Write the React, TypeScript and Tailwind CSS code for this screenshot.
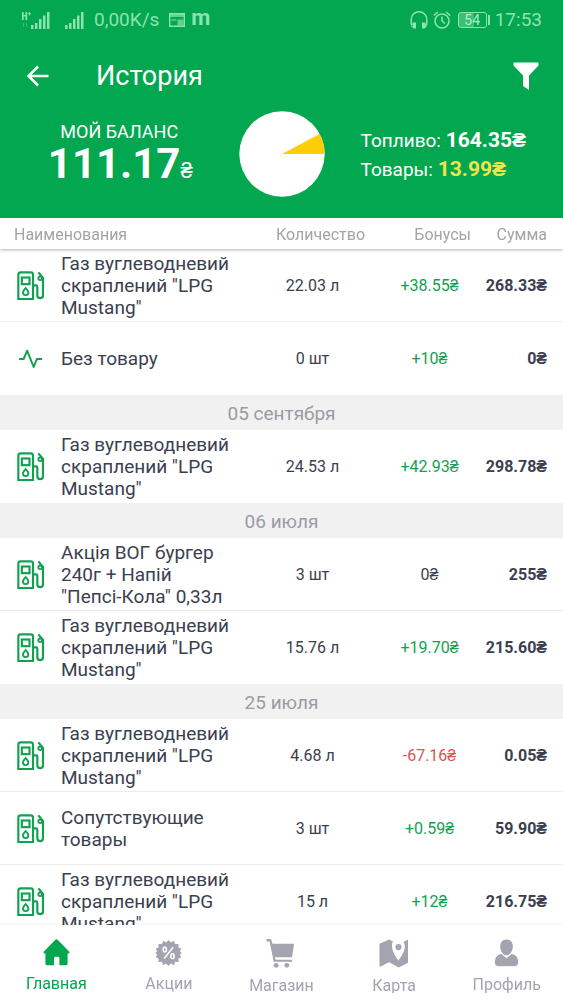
import React from "react";

type Tone = "plus" | "minus" | "none";

interface Entry {
  icon: "fuel" | "pulse";
  name: string;
  amount: string;
  bonus: string;
  tone: Tone;
  sum: string;
}

interface Group {
  date?: string;
  entries: Entry[];
}

const LPG = 'Газ вуглеводневий скраплений "LPG Mustang"';

const groups: Group[] = [
  {
    entries: [
      { icon: "fuel", name: LPG, amount: "22.03 л", bonus: "+38.55₴", tone: "plus", sum: "268.33₴" },
      { icon: "pulse", name: "Без товару", amount: "0 шт", bonus: "+10₴", tone: "plus", sum: "0₴" },
    ],
  },
  {
    date: "05 сентября",
    entries: [{ icon: "fuel", name: LPG, amount: "24.53 л", bonus: "+42.93₴", tone: "plus", sum: "298.78₴" }],
  },
  {
    date: "06 июля",
    entries: [
      { icon: "fuel", name: 'Акція ВОГ бургер 240г + Напій "Пепсі-Кола" 0,33л', amount: "3 шт", bonus: "0₴", tone: "none", sum: "255₴" },
      { icon: "fuel", name: LPG, amount: "15.76 л", bonus: "+19.70₴", tone: "plus", sum: "215.60₴" },
    ],
  },
  {
    date: "25 июля",
    entries: [
      { icon: "fuel", name: LPG, amount: "4.68 л", bonus: "-67.16₴", tone: "minus", sum: "0.05₴" },
      { icon: "fuel", name: "Сопутствующие товары", amount: "3 шт", bonus: "+0.59₴", tone: "plus", sum: "59.90₴" },
      { icon: "fuel", name: LPG, amount: "15 л", bonus: "+12₴", tone: "plus", sum: "216.75₴" },
    ],
  },
];

const toneClass: Record<Tone, string> = {
  plus: "text-[#12a150]",
  minus: "text-[#e0524f]",
  none: "text-[#3b4050]",
};

function FuelIcon() {
  return (
    <svg viewBox="0 0 84 90" className="h-[30px] w-7" fill="none" stroke="#12a150" strokeWidth="6.5" aria-hidden="true">
      <path d="M4 84V11a7 7 0 0 1 7-7h30a7 7 0 0 1 7 7v73Z" />
      <rect x="14.5" y="19.5" width="23" height="20" />
      <path d="M26 51c4 5 8 8.500 8 13.500a8 8 0 0 1-16 0C18 59.500 22 56 26 51Z" strokeWidth="5.5" />
      <path d="M48 43h9a4 4 0 0 1 4 4v26a8.500 8.500 0 0 0 17 0V21L64 4" />
      <circle cx="69.500" cy="22" r="5.500" strokeWidth="5.5" />
    </svg>
  );
}

function PulseIcon() {
  return (
    <svg viewBox="0 0 84 90" className="h-[30px] w-7" fill="none" stroke="#12a150" strokeWidth="6" strokeLinejoin="round" strokeLinecap="round" aria-hidden="true">
      <path d="M8 45H20L30.500 20L50 69L59.500 45H73" />
    </svg>
  );
}

function Signal() {
  return (
    <svg viewBox="0 0 19 18" className="h-[18px] w-[19px]" fill="currentColor" aria-hidden="true">
      <path d="M0 14h2.500v4H0zM4 12h2.500v6H4zM8 8h2.500v10H8zM12 4.500h2.500V18H12zM16 1h2.500v17H16z" />
    </svg>
  );
}

function StatusBar() {
  return (
    <div className="flex h-10 items-center justify-between pl-[22px] pr-[21px] text-[19px] leading-6 text-[#8ce3b0]">
      <div className="flex items-center">
        <svg viewBox="0 0 9 18" className="h-[18px] w-[9px]" fill="currentColor" aria-hidden="true">
          <path d="M0 1h1.700v3H3.500V1h1.700v8H3.500V5.500H1.700V9H0zM7 1h1v1.200h1.200v1H8v1.200H7V3.200H5.900v-1H7z" />
          <path d="M1.500 12v4M4.500 12v4" stroke="currentColor" strokeWidth="1" opacity=".4" />
        </svg>
        <Signal />
        <span className="w-[15px]" />
        <Signal />
        <span className="ml-2.5">0,00K/s</span>
        <svg viewBox="0 0 16 14" className="ml-2.5 h-[14px] w-4" aria-hidden="true">
          <path d="M.7.7h14.600v12.600H.7z" fill="none" stroke="currentColor" strokeWidth="1.400" />
          <path d="M0 0h16v4H0zM8.500 6.500h6v6h-6z" fill="currentColor" opacity=".7" />
          <path d="M2.500 7h5" stroke="currentColor" />
        </svg>
        <span className="ml-1.5 h-7 text-[22px] leading-6 font-bold">m</span>
      </div>
      <div className="flex items-center">
        <svg viewBox="0 0 18 18" className="h-[18px] w-[18px]" fill="none" stroke="currentColor" strokeWidth="1.500" aria-hidden="true">
          <path d="M1.200 14V8.500a7.700 7.700 0 0 1 15.600 0V14" />
          <path d="M1 11h0.800V15L3 15zM3 11.500h3v6H3.500L1 15zM15 11.500h-3v6h2.500L17 15z" fill="currentColor" stroke="none" />
        </svg>
        <svg viewBox="0 0 18 18" className="ml-[5px] h-[18px] w-[18px]" fill="none" stroke="currentColor" strokeWidth="1.600" aria-hidden="true">
          <circle cx="9" cy="10" r="7" />
          <path d="M9 5.500V10l3 2.500M.8 4.500l4-3.500M17.200 4.500l-4-3.500" />
        </svg>
        <span className="ml-[7px] flex h-4 w-[29px] items-center justify-center rounded-[3px] border border-[#8ce3b0] bg-linear-to-r from-[#3dbf76] from-54% to-transparent to-54% text-[14px] leading-none text-[#a9f0c6]">
          54
        </span>
        <span className="ml-px h-2.5 w-0.5 bg-[#8ce3b0]" />
        <span className="ml-[5px]">17:53</span>
      </div>
    </div>
  );
}

function BalancePie() {
  return (
    <svg viewBox="0 0 86 86" className="size-[86px]" role="img" aria-label="Топливо и товары">
      <circle cx="43" cy="43" r="42.700" fill="#fff" />
      <path d="M43 43L80.600 22.900A42.700 42.700 0 0 1 85.700 43Z" fill="#fdcd05" />
    </svg>
  );
}

const tabs = [
  {
    label: "Главная",
    active: true,
    icon: (
      <svg viewBox="0 0 28 28" className="h-[27px] w-[27px]" fill="currentColor" aria-hidden="true">
        <path d="M12.800.900a1.700 1.700 0 0 1 2.400 0L27 13c.9.900.5 2-.7 2H25.500v10.500c0 1-.7 1.700-1.700 1.700H17V20a1.500 1.500 0 0 0-1.500-1.500h-2.500A1.500 1.500 0 0 0 11.500 20v7.200H4.200c-1 0-1.700-.7-1.700-1.700V15H1.700c-1.200 0-1.600-1.100-.7-2Z" />
      </svg>
    ),
  },
  {
    label: "Акции",
    active: false,
    icon: (
      <svg viewBox="0 0 28 28" className="h-[27px] w-[27px]" aria-hidden="true">
        <path
          fill="currentColor"
          d="M14 1l2.500 2.700L19.600 1.900l1.200 3.400 3.600-.1-.1 3.600 3 1.200-1.500 2.900 2 1.600-2 1.600 1.500 2.900-3 1.200.1 3.600-3.600-.1-1.200 3.400-3.100-1.800L14 28l-2.500-2.700-3.100 1.800-1.200-3.400-3.600.1.100-3.600-3-1.200 1.500-2.900-2-1.600 2-1.600L.7 10l3-1.200-.1-3.600 3.600.1 1.200-3.400 3.100 1.800Z"
        />
        <g fill="none" stroke="#fff" strokeWidth="1.600">
          <path d="M18.800 8.500L9.500 20.300" />
          <ellipse cx="10.200" cy="11" rx="1.700" ry="2.400" />
          <ellipse cx="18.200" cy="17.800" rx="1.700" ry="2.400" />
        </g>
      </svg>
    ),
  },
  {
    label: "Магазин",
    active: false,
    icon: (
      <svg viewBox="0 0 30 30" className="h-[29px] w-[30px]" fill="currentColor" aria-hidden="true">
        <path d="M0 0h3.500c.9 0 1.200.3 1.500 1.200L6.200 5H28.500L26.500 19H8.800l.5 2.500H26.500v2H7.500L3.200 2.500H0Z" />
        <circle cx="10" cy="27.200" r="2.500" />
        <circle cx="21" cy="27.200" r="2.500" />
      </svg>
    ),
  },
  {
    label: "Карта",
    active: false,
    icon: (
      <svg viewBox="0 0 30 30" className="h-[29px] w-[30px]" aria-hidden="true">
        <path fill="currentColor" d="M0 5L10 .500l4 2.200C13 4 12.700 6 13 9c.7 4.500 3.500 9 6.500 13.500C22.500 18 25.500 13.500 26.200 9c.2-2.500-.2-4.200-1.500-6L29.500.5v24L20 29.500l-10-5.500L0 29Z" />
        <circle cx="19.600" cy="8.400" r="3.200" fill="currentColor" />
      </svg>
    ),
  },
  {
    label: "Профиль",
    active: false,
    icon: (
      <svg viewBox="0 0 26 29" className="h-[28px] w-[25px]" fill="currentColor" aria-hidden="true">
        <path d="M13 .5c4 0 6.600 3 6.600 7.200S16.800 17 13 17s-6.600-5-6.600-9.300S9 .5 13 .5Z" />
        <path d="M7.500 15L13 19.500 18.500 15c4.500 1 7 4.500 7 9 0 3-1.500 4.500-4 4.500h-17c-2.500 0-4-1.500-4-4.500 0-4.500 2.500-8 7-9Z" stroke="#fff" strokeWidth=".8" />
      </svg>
    ),
  },
];

export default function App() {
  return (
    <div className="flex h-screen flex-col overflow-hidden bg-white font-[Roboto,sans-serif] text-[#3b4050]">
      <header className="shrink-0 bg-[#02a74f] text-white">
        <StatusBar />
        <div className="flex h-[71px] items-center pl-[26px] pr-6">
          <button type="button" aria-label="Назад">
            <svg viewBox="0 0 23 22" className="h-[22px] w-[23px]" fill="none" stroke="currentColor" strokeWidth="2.500" aria-hidden="true">
              <path d="M22.500 11H2.500M12 1.500L2.500 11l9.500 9.500" />
            </svg>
          </button>
          <h1 className="ml-[47px] flex-1 text-[27px] leading-8">История</h1>
          <button type="button" aria-label="Фильтр">
            <svg viewBox="0 0 26 28" className="h-[28px] w-[26px]" fill="currentColor" aria-hidden="true">
              <path d="M.5.500h25v3L16 13.500v14.500L10 24V13.500L.5 3.500Z" />
            </svg>
          </button>
        </div>
        <div className="grid h-[107px] grid-cols-[1fr_86px_1fr]">
          <div className="pt-[9px] text-center">
            <p className="text-[18px] leading-6">МОЙ БАЛАНС</p>
            <p className="pl-0.5 text-[42px] leading-10 font-bold">
              111.17<span className="text-[22px] font-normal">₴</span>
            </p>
          </div>
          <BalancePie />
          <div className="pt-[15px] pl-9 text-[19px] leading-[29px]">
            <p>
              Топливо: <b className="text-[21px]">164.35₴</b>
            </p>
            <p>
              Товары: <b className="text-[21px] text-[#f3e34a]">13.99₴</b>
            </p>
          </div>
        </div>
      </header>

      <main className="min-h-0 flex-1 overflow-y-auto [scrollbar-width:none]">
        <table className="w-full table-fixed border-separate border-spacing-0">
          <colgroup>
            <col />
            <col className="w-[117px]" />
            <col className="w-[111px]" />
            <col className="w-[81px]" />
          </colgroup>
          <thead className="sticky top-0 z-10 bg-white text-[16px] leading-[29px] text-[#a3a4a9] shadow-[0_1px_3px_rgba(0,0,0,0.3)]">
            <tr className="h-[31px]">
              <th className="pt-0.5 pl-3.5 text-left font-normal">Наименования</th>
              <th className="pt-0.5 pl-4 text-center font-normal">Количество</th>
              <th className="pt-0.5 pr-[11px] text-right font-normal">Бонусы</th>
              <th className="pt-0.5 pr-4 text-right font-normal">Сумма</th>
            </tr>
          </thead>
          {groups.map((group, g) => (
            <tbody key={g}>
              {group.date && (
                <tr className="h-[35px] bg-[#f1f1f2]">
                  <th colSpan={4} className="pt-0.5 text-center text-[19px] leading-6 font-normal text-[#9b9ba3]">
                    {group.date}
                  </th>
                </tr>
              )}
              {group.entries.map((entry, i) => {
                const line = i < group.entries.length - 1 ? "border-b border-[#ebebed]" : "";
                return (
                  <tr key={i} className="h-[73px] text-[16px] leading-[22px]">
                    <td className={"pt-px " + line}>
                      <div className="flex items-center gap-4 pr-5 pl-[17px]">
                        <span className="w-7 shrink-0">{entry.icon === "fuel" ? <FuelIcon /> : <PulseIcon />}</span>
                        <span className="text-[19px]">{entry.name}</span>
                      </div>
                    </td>
                    <td className={"pt-px text-center " + line}>{entry.amount}</td>
                    <td className={"pt-px pl-1.5 text-center " + toneClass[entry.tone] + " " + line}>{entry.bonus}</td>
                    <td className={"pt-px pr-4 text-right font-bold " + line}>{entry.sum}</td>
                  </tr>
                );
              })}
            </tbody>
          ))}
        </table>
      </main>

      <nav className="z-10 shrink-0 bg-white pb-[7px] shadow-[0_-1px_3px_rgba(0,0,0,0.06)]">
        <div className="grid h-[68px] grid-cols-5 overflow-hidden pt-3.5">
          {tabs.map((tab) => (
            <a
              key={tab.label}
              href="#"
              className={"flex flex-col items-center gap-[7px] text-[16px] leading-[22px] " + (tab.active ? "text-[#02a74f]" : "text-[#a3a4b0]")}
            >
              {tab.icon}
              <span>{tab.label}</span>
            </a>
          ))}
        </div>
      </nav>
    </div>
  );
}
